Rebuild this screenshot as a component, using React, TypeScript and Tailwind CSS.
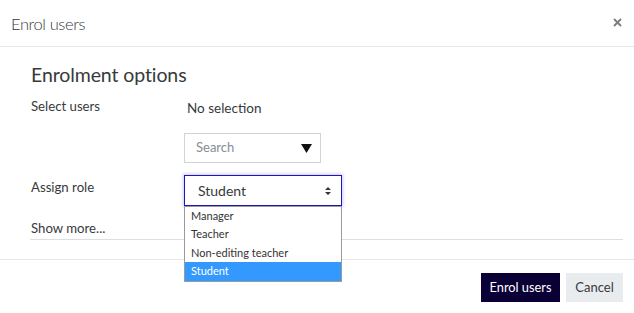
import React from 'react';

const roles = ['Manager', 'Teacher', 'Non-editing teacher', 'Student'];

const App: React.FC = () => {
  return (
    <div className="w-[634px] h-[313px] bg-white overflow-hidden text-[#373a3c] font-['Lato','Open_Sans',sans-serif]">
      <div className="h-[47px] border-b border-[#e6e6e6] flex items-center justify-between pl-[11px] pr-[12px]">
        <h5 className="text-[16.5px] leading-[22px] font-light tracking-[-0.4px] pt-[1px]">Enrol users</h5>
        <button className="w-[10px] h-[10px] flex items-center justify-center mt-[-2px]">
          <svg width="9" height="9" viewBox="0 0 9 9">
            <path d="M1 1L8 8M8 1L1 8" stroke="#7d7d7d" strokeWidth="1.9" />
          </svg>
        </button>
      </div>

      <div className="h-[212px] pt-[16px] px-[30px] pr-[11px]">
        <div className="pl-[1px] text-[19.5px] leading-[24px] tracking-[-0.1px]">Enrolment options</div>

        <div className="flex mt-[10px] pl-[1px]">
          <div className="w-[153px] pt-[1px] text-[13.2px] leading-[17px]">Select users</div>
          <div className="flex flex-col">
            <div className="pl-[3px] pt-[3px] text-[13.5px] leading-[17px]">No selection</div>
            <div className="mt-[16px] w-[137px] h-[30px] border border-[#ced4da] flex items-center justify-between pl-[11px] pr-[8px]">
              <span className="text-[13px] text-[#868e96]">Search</span>
              <svg width="11" height="9" viewBox="0 0 11 9">
                <path d="M0 0H11L5.5 9Z" fill="#111" />
              </svg>
            </div>
          </div>
        </div>

        <div className="flex mt-[12px] pl-[1px]">
          <div className="w-[153px] pt-[4px] text-[13.2px] leading-[17px]">Assign role</div>
          <div className="relative">
            <div className="w-[158px] h-[31px] border border-[#1c17b4] shadow-[0_0_3px_1px_rgba(110,100,255,0.35)] flex items-center justify-between pl-[13px] pr-[10px]">
              <span className="text-[14px]">Student</span>
              <svg width="6" height="8" viewBox="0 0 6 8">
                <path d="M3 0L6 3H0Z M3 8L0 5H6Z" fill="#333" />
              </svg>
            </div>
            <div className="absolute left-0 top-full z-10 w-[158px] bg-white border border-[#9a9a9a]">
              {roles.map((r, i) => (
                <div
                  key={r}
                  className={`pl-[6px] text-[11px] flex items-center ${i % 2 === 0 ? 'h-[18px]' : 'h-[19px]'} ${r === 'Student' ? 'bg-[#3399ff] text-white' : 'text-[#333]'}`}
                >
                  {r}
                </div>
              ))}
            </div>
          </div>
        </div>

        <div className="mt-[14px] pl-[1px] pb-[2px] border-b border-[#dedede] text-[13.2px] leading-[17px]">Show more...</div>
      </div>

      <div className="border-t border-[#e6e6e6] flex justify-end gap-[6px] pt-[13px] pr-[11px]">
        <button className="h-[29px] w-[79px] bg-[#0b0035] text-white text-[12.8px]">Enrol users</button>
        <button className="h-[29px] w-[57px] bg-[#e9ecef] text-[#373a3c] text-[13px]">Cancel</button>
      </div>
    </div>
  );
};

export default App;
